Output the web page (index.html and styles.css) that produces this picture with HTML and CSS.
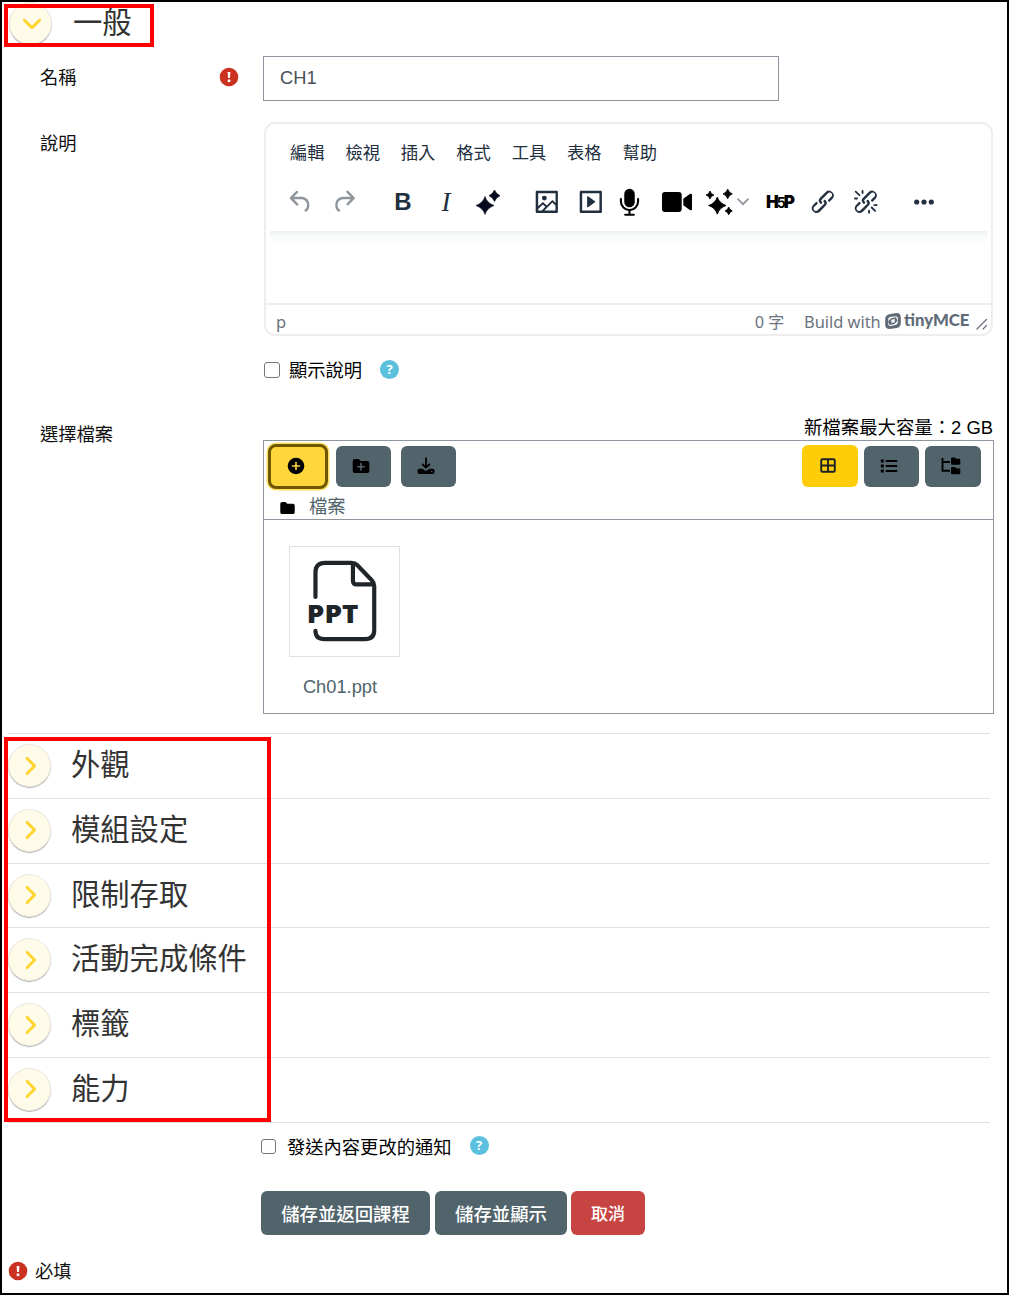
FILE: index.html
```html
<!DOCTYPE html>
<html lang="zh-Hant">
<head>
<meta charset="utf-8">
<title>CH1</title>
<link rel="stylesheet" href="styles.css">
</head>
<body>
<svg class="defs" aria-hidden="true">
  <symbol id="required" viewBox="0 0 20 20"><circle cx="10" cy="10" r="9.3" fill="#ca3120"/><path d="M8.600 5h2.800l-.4 6H9z" fill="#fff"/><circle cx="10" cy="13.800" r="1.500" fill="#fff"/></symbol>
  <symbol id="link" viewBox="0 0 24 24"><path d="M6.2 12.3a1 1 0 0 1 1.4 1.4l-2 2a2 2 0 1 0 2.6 2.8l4.8-4.8a1 1 0 0 0 0-1.4 1 1 0 1 1 1.4-1.3 2.9 2.9 0 0 1 0 4L9.6 20a3.9 3.9 0 0 1-5.5-5.5l2-2Zm11.6-.6a1 1 0 0 1-1.4-1.4l2-2a2 2 0 1 0-2.6-2.8L11 10.3a1 1 0 0 0 0 1.4A1 1 0 1 1 9.6 13a2.9 2.9 0 0 1 0-4L14.4 4a3.9 3.9 0 0 1 5.5 5.5l-2 2Z"/></symbol>
  <symbol id="chevron" viewBox="0 0 20 20"><path d="M6.200 2.400 13.600 10l-7.400 7.600" fill="none" stroke="#ffd42e" stroke-width="2.900" stroke-linecap="round" stroke-linejoin="round"/></symbol>
</svg>
<main class="frame">
  <div class="mark mark-top"></div>
  <div class="mark mark-list"></div>

  <h3 class="section general"><span class="toggle"><svg class="down"><use href="#chevron"/></svg></span>一般</h3>

  <div class="row name-row">
    <label class="label">名稱</label>
    <svg class="req"><use href="#required"/></svg>
    <div class="input">CH1</div>
  </div>

  <div class="row editor-row">
    <label class="label">說明</label>
    <div class="editor">
      <nav class="menu"><span>編輯</span><span>檢視</span><span>插入</span><span>格式</span><span>工具</span><span>表格</span><span>幫助</span></nav>
      <div class="toolbar">
        <span class="w46 dim"><svg class="ic" viewBox="0 0 24 24"><path d="M6.4 8H12c3.7 0 6.2 2 6.8 5.1.6 2.7-.4 5.6-2.3 6.8a1 1 0 0 1-1-1.8c1.1-.6 1.8-2.7 1.4-4.6-.5-2.1-2.1-3.5-4.9-3.5H6.4l3.3 3.3a1 1 0 1 1-1.4 1.4l-5-5a1 1 0 0 1 0-1.4l5-5a1 1 0 0 1 1.4 1.4L6.4 8Z"/></svg></span>
        <span class="w40 dim"><svg class="ic" viewBox="0 0 24 24"><path d="M17.6 10H12c-2.8 0-4.4 1.4-4.9 3.5-.4 2 .3 4 1.4 4.6a1 1 0 1 1-1 1.8c-2-1.2-2.9-4.1-2.3-6.8.6-3 3-5.1 6.8-5.1h5.6l-3.3-3.3a1 1 0 1 1 1.4-1.4l5 5a1 1 0 0 1 0 1.4l-5 5a1 1 0 0 1-1.4-1.4l3.3-3.3Z"/></svg></span>
        <span class="w42 gap18 bold">B</span>
        <span class="w44 italic">I</span>
        <span class="w40"><svg class="sparkle" viewBox="0 0 26 26"><path fill="#050a1c" stroke="#050a1c" stroke-width=".6" d="M10 7.500q2 6.500 9 9-7 2.500-9 9-2-6.500-9-9 7-2.500 9-9ZM19.500 1q1.500 4 5.500 5.700-4 1.700-5.500 5.800-1.500-4.100-5.500-5.800 4-1.700 5.500-5.700Z"/></svg></span>
        <span class="w42 gap18"><svg class="ic" viewBox="0 0 24 24"><path fill-rule="evenodd" d="m5 15.700 3.300-3.200c.3-.3.700-.3 1 0L12 15l4.100-4c.3-.4.800-.4 1 0l2 1.900V5H5v10.700ZM5 18V19h3l2.800-2.900-2-2L5 17.900Zm14-3-2.500-2.400-6.400 6.500H19v-4ZM4 3h16c.6 0 1 .4 1 1v16c0 .6-.4 1-1 1H4a1 1 0 0 1-1-1V4c0-.6.400-1 1-1Zm6 8a2 2 0 1 0 0-4 2 2 0 0 0 0 4Z"/></svg></span>
        <span class="w45"><svg class="ic" viewBox="0 0 24 24"><path fill-rule="evenodd" d="M4 3h16c.6 0 1 .4 1 1v16c0 .6-.4 1-1 1H4a1 1 0 0 1-1-1V4c0-.6.400-1 1-1Zm1 2v14h14V5H5Zm4.800 2.600 5.600 4a.5.5 0 0 1 0 .8l-5.600 4A.5.5 0 0 1 9 16V8a.5.5 0 0 1 .8-.4Z"/></svg></span>
        <span class="w33"><svg class="mic" viewBox="0 0 22 30"><rect x="5.500" y="1" width="11" height="19.500" rx="5.500" fill="#000"/><path d="M2 12v2.500a9 9 0 0 0 18 0V12M11 23.500v4.500M6.500 28.300h9" fill="none" stroke="#000" stroke-width="2.200" stroke-linecap="round"/></svg></span>
        <span class="w45 gap8"><svg class="video" viewBox="0 0 30 20"><rect width="19.700" height="20" rx="3" fill="#000"/><path fill="#000" d="M21.300 6.800 27.800 2q2.200-1 2.200 1v14q0 2-2.200 1l-6.500-4.800z"/></svg></span>
        <span class="w35 gap3"><svg class="stars" viewBox="0 0 28 28"><path fill="#000" stroke="#000" stroke-width=".8" stroke-linejoin="round" d="M12.300 9q2 6.200 8.700 8.500-6.700 2.300-8.700 8.700-2-6.400-8.700-8.700Q10.300 15.200 12.300 9ZM22.700 1q1 3.700 4.700 4.900-3.700 1.200-4.700 4.900-1-3.700-4.700-4.900 3.700-1.200 4.700-4.900ZM5 3q.8 3.100 4 4-3.200.9-4 4-.8-3.100-4-4 3.200-.9 4-4ZM23.700 19q.8 3 3.600 3.900-2.800.9-3.600 3.900-.8-3-3.600-3.900 2.800-.9 3.600-3.900Z"/></svg></span>
        <span class="w12"><svg class="caret" viewBox="0 0 12 8"><path d="m1 1.200 5 5 5-5" fill="none" stroke="#8e959d" stroke-width="1.700" stroke-linecap="round"/></svg></span>
        <span class="w36 gap13 h5p">H<small>5</small>P</span>
        <span class="w38 gap6"><svg class="ic"><use href="#link"/></svg></span>
        <span class="w38 gap5"><svg class="ic" viewBox="0 0 24 24"><use href="#link" width="24" height="24"/><path d="M7.600 6.300a.8.8 0 0 1-1 1.100L3.300 4.200a.7.7 0 1 1 1-1l3.200 3.100ZM5.100 8.600a.8.8 0 0 1 0 1.500H3a.8.8 0 0 1 0-1.500h2Zm5-3.500a.8.8 0 0 1-1.500 0V3a.8.8 0 0 1 1.500 0v2Zm6 11.800a.8.8 0 0 1 1-1l3.200 3.200a.8.8 0 0 1-1 1L16 17Zm-2.200 2a.8.8 0 0 1 1.500 0V21a.8.8 0 0 1-1.500 0V19Zm5-3.500a.7.7 0 1 1 0-1.500H21a.8.8 0 0 1 0 1.500h-2Z"/></svg></span>
        <span class="w40 gap19"><svg class="dots" viewBox="0 0 20 6"><circle cx="2.700" cy="3" r="2.600"/><circle cx="10" cy="3" r="2.600"/><circle cx="17.300" cy="3" r="2.600"/></svg></span>
      </div>
      <div class="canvas"></div>
      <div class="status">
        <span class="path">p</span>
        <span class="count">0 字</span>
        <span class="build">Build with</span>
        <svg class="tlogo" viewBox="0 0 16 16"><path fill="#606b78" fill-rule="evenodd" d="M5.500 1 11 .1Q15.500-.3 15.800 4v6.500q-.3 3.800-4 4.500L5 15.900Q.3 16 .2 12V5.500Q.6 1.800 5.500 1ZM6 3.700Q3.200 4.300 3.200 7v4.200q.2 2 2.600 1.700l4.400-.8q2.500-.6 2.600-2.900V5.100q-.2-2-2.600-1.700Z"/><path fill="#606b78" fill-rule="evenodd" d="m3 8.500 3-3.300 5-.9 1.500 3.400-3 3.300-5 .9ZM6.400 6.700v3.200l3.300-.6V6.100Z"/></svg>
        <span class="tiny">tinyMCE</span>
        <svg class="resize" viewBox="0 0 12 12"><path d="M1 11 10.500 1.500M7 11l3.500-3.500" stroke="#69727e" stroke-width="1.300" stroke-linecap="round"/></svg>
      </div>
    </div>
  </div>

  <div class="check show-desc"><span class="box"></span><span class="text">顯示說明</span><span class="help">?</span></div>

  <div class="maxsize">新檔案最大容量：2 GB</div>
  <div class="row files-row">
    <label class="label">選擇檔案</label>
    <div class="files">
      <div class="files-head">
        <div class="buttons">
          <button class="btn add"><svg viewBox="0 0 18 18"><circle cx="9" cy="9" r="8.300"/><path d="M9 5.500v7M5.500 9h7" stroke="#ffd73a" stroke-width="1.600" stroke-linecap="round"/></svg></button>
          <button class="btn"><svg viewBox="0 0 18 18"><path d="M.7 4q0-2 2-2h4l2 2h6.600q2 0 2 2v8q0 2-2 2H2.700q-2 0-2-2Z"/><path d="M9 6.500v6.400M5.800 9.700h6.400" stroke="#51646b" stroke-width="1.600" stroke-linecap="round"/></svg></button>
          <button class="btn dl"><svg viewBox="0 0 18 18"><path d="M9 1.200v9M5.700 7.500 9 10.700l3.300-3.200" fill="none" stroke="#000" stroke-width="1.800" stroke-linecap="round" stroke-linejoin="round"/><path d="M2.300 11.800h3L9 14l3.700-2.200h3q1.800 0 1.800 1.700v1.700q0 1.800-1.800 1.800H2.300Q.5 17 .5 15.200v-1.700q0-1.700 1.800-1.700Z"/><circle cx="14.700" cy="14.500" r=".8" fill="#51646b"/></svg></button>
          <button class="btn view on"><svg viewBox="0 0 18 18"><path d="M3.500 2.200h11q1.300 0 1.300 1.300v10q0 1.300-1.300 1.300h-11q-1.300 0-1.300-1.300v-10q0-1.300 1.300-1.300ZM9 2.200v12.600M2.200 8.500h13.600" fill="none" stroke="#1d2125" stroke-width="1.900"/></svg></button>
          <button class="btn view"><svg viewBox="0 0 18 18"><path d="M6.500 4h10M6.500 9h10M6.500 14h10" stroke="#000" stroke-width="1.800" stroke-linecap="round"/><path d="M.8 2.500h3v3h-3zM.8 7.500h3v3h-3zM.8 12.500h3v3h-3z"/></svg></button>
          <button class="btn view tree"><svg viewBox="0 0 20 18"><path d="M1.500 1v12.700H9M1.500 5H9" fill="none" stroke="#000" stroke-width="1.900"/><path d="M10 1.500q0-1 1-1h3l1.200 1.200H18q1.300 0 1.300 1.300v3.500q0 1.300-1.300 1.300h-6.800Q10 7.800 10 6.500ZM10 11q0-1 1-1h3l1.200 1.200H18q1.300 0 1.300 1.300V16q0 1.300-1.300 1.300h-6.800Q10 17.300 10 16Z"/></svg></button>
        </div>
        <div class="crumb"><svg viewBox="0 0 16 14"><path d="M.3 2.500q0-2 2-2h3.500l2 1.900h5.900q2 0 2 2v7.100q0 2-2 2H2.300q-2 0-2-2Z"/></svg><span>檔案</span></div>
      </div>
      <div class="file">
        <div class="thumb"><svg viewBox="0 0 110 110"><g fill="none" stroke="#20252a" stroke-width="4.200" stroke-linecap="round" stroke-linejoin="round"><path d="M25.700 50.500V25.500q0-9.500 9.500-9.500H62q3.500 0 6 2.500l14.500 15q2.500 2.500 2.500 6v44.500q0 9-9.500 9H35q-9.300 0-9.300-8.500"/><path d="M63.500 18v16q0 3.700 3.700 3.700H83"/></g><text x="17" y="77" textLength="52" lengthAdjust="spacingAndGlyphs">PPT</text></svg></div>
        <div class="filename">Ch01.ppt</div>
      </div>
    </div>
  </div>

  <div class="sections">
    <h3 class="section"><span class="toggle"><svg><use href="#chevron"/></svg></span>外觀</h3>
    <h3 class="section"><span class="toggle"><svg><use href="#chevron"/></svg></span>模組設定</h3>
    <h3 class="section"><span class="toggle"><svg><use href="#chevron"/></svg></span>限制存取</h3>
    <h3 class="section"><span class="toggle"><svg><use href="#chevron"/></svg></span>活動完成條件</h3>
    <h3 class="section"><span class="toggle"><svg><use href="#chevron"/></svg></span>標籤</h3>
    <h3 class="section"><span class="toggle"><svg><use href="#chevron"/></svg></span>能力</h3>
  </div>

  <div class="check notify"><span class="box"></span><span class="text">發送內容更改的通知</span><span class="help">?</span></div>
  <div class="actions"><button class="action save-back">儲存並返回課程</button><button class="action save-show">儲存並顯示</button><button class="action cancel">取消</button></div>
  <div class="footer"><svg class="req"><use href="#required"/></svg>必填</div>
</main>
</body>
</html>
```
FILE: styles.css
```css
* { box-sizing: border-box; }
body { margin: 0; background: #fff; color: #1d2125; font-family: "Liberation Sans", "Noto Sans CJK TC", sans-serif; font-size: 18.3px; }
button { font: inherit; padding: 0; border: 0; }
svg { display: block; flex: none; }
.defs { position: absolute; width: 0; height: 0; }
.frame { position: relative; width: 1009px; height: 1295px; border: 2px solid #000; overflow: hidden; }

/* highlight rectangles laid over the form */
.mark { position: absolute; z-index: 2; border: 4px solid #f00; }
.mark-top { left: 2px; top: 2px; width: 150px; height: 43px; }
.mark-list { left: 2px; top: 735px; width: 267px; height: 385px; }

.section { display: flex; align-items: flex-start; gap: 20px; margin: 0; padding-left: 1px; font-size: 29.3px; font-weight: 400; color: #333; }
.toggle { display: flex; align-items: center; justify-content: center; width: 43px; height: 43px; border-radius: 50%; background: #fffbe9; border: 1px solid #ebe7e0; box-shadow: 0 1px 1px -0.3px rgba(0,0,0,.4); }
.toggle svg { width: 20px; height: 20px; margin-left: 3px; }
.toggle svg.down { transform: rotate(90deg); margin: 0 0 0 2px; }
.general { height: 44px; padding-left: 7px; line-height: 42px; gap: 21px; }

.row { display: flex; align-items: flex-start; }
.label { padding-left: 38px; line-height: 26px; color: #111; flex: none; }
.name-row { margin-top: 10px; height: 66px; }
.name-row .label { width: 217px; padding-top: 9px; }
.req { width: 20px; height: 20px; }
.name-row .req { margin-top: 11px; }
.input { width: 516px; height: 45px; margin-left: 24px; border: 1px solid #8f959e; line-height: 42px; padding-left: 16px; color: #495057; }
.editor-row .label { width: 262px; padding-top: 9px; }

.editor { width: 729px; height: 214px; border: 2px solid #eee; border-radius: 11px; overflow: hidden; display: flex; flex-direction: column; }
.menu { height: 57px; padding: 0 24px; display: flex; gap: 20.900px; line-height: 58px; font-size: 17.250px; color: #222f3e; }
.toolbar { height: 50px; padding: 0 0 8px 12px; display: flex; align-items: center; }
.toolbar > span { display: flex; align-items: center; justify-content: center; flex: none; height: 42px; }
.ic { width: 29.600px; height: 29.600px; fill: #222f3e; }
.dim .ic { fill: #8e959d; }
.sparkle { width: 26px; height: 26px; }
.mic { width: 21px; height: 30px; }
.video { width: 30px; height: 20px; }
.stars { width: 28px; height: 28px; margin-right: 2px; }
.caret { width: 12px; height: 8px; }
.dots { width: 20px; height: 6px; fill: #222f3e; }
.bold { font: bold 24px "Liberation Sans", sans-serif; color: #222f3e; }
.italic { font: italic 27px "Liberation Serif", serif; color: #222f3e; }
.h5p { font: 900 17px Inter, sans-serif; letter-spacing: -1px; color: #000; }
.h5p small { font-size: 14px; margin: 1px -1px 0; font-weight: 700; }
.w12 { width: 12px; } .w33 { width: 33px; } .w35 { width: 35px; } .w36 { width: 36px; } .w38 { width: 38px; }
.w40 { width: 40px; } .w42 { width: 42px; } .w44 { width: 44px; } .w45 { width: 45px; } .w46 { width: 46px; }
.gap3 { margin-left: 3px; } .gap5 { margin-left: 5px; } .gap6 { margin-left: 6px; } .gap8 { margin-left: 8px; }
.gap13 { margin-left: 13px; } .gap18 { margin-left: 18px; } .gap19 { margin-left: 19px; }
.canvas { flex: 1; margin: 0 4px; background: linear-gradient(#eeefef, #fafbfb 6px, #fff 16px); }
.status { height: 31px; border-top: 2px solid #eee; display: flex; line-height: 35px; color: #69727e; font-size: 16.500px; overflow: hidden; padding-left: 10px; }
.status .path { width: 479px; font: 16.500px/34px "Noto Sans", sans-serif; }
.count { width: 49px; font-size: 16px; }
.build { width: 81px; font: 16.400px/34px "Noto Sans", sans-serif; white-space: nowrap; }
.tlogo { width: 16px; height: 16px; margin-top: 8px; }
.tiny { margin-left: 3px; width: 72px; font: 900 16.700px/31px Lato, sans-serif; color: #606b78; white-space: nowrap; }
.resize { width: 12px; height: 12px; margin-top: 13px; }

.check { display: flex; align-items: center; height: 26px; line-height: 26px; color: #000; }
.box { width: 16px; height: 16px; border: 1.500px solid #767676; border-radius: 3px; }
.text { margin-left: 9px; }
.help { width: 19px; height: 19px; margin: -3px 0 0 18px; border-radius: 50%; background: #5bc0de; color: #fff; font: bold 13px/19px "Open Sans", sans-serif; text-align: center; }
.show-desc { margin: 22px 0 0 262px; }
.show-desc .box { margin-top: -3px; }

.maxsize { height: 26px; margin-top: 30px; padding-right: 14px; text-align: right; line-height: 28px; font-size: 18.400px; color: #000; }
.files-row .label { width: 261px; margin-top: -18px; }
.files { width: 731px; height: 274px; border: 1px solid #8f959e; }
.files-head { height: 79px; border-bottom: 1px solid #8f959e; }
.buttons { display: flex; height: 52px; padding: 3px 12px 0 4px; }
.btn { width: 55px; height: 41px; margin: 2px 0 0 10px; border-radius: 6px; background: #51646b; display: flex; align-items: center; justify-content: center; }
.btn svg { width: 18px; height: 18px; margin: 0 5px 2px 0; }
.btn.add { width: 60px; height: 45px; margin: 0; background: #ffd73a; border: 3px solid #6f5700; box-shadow: 0 0 0 1.500px #ffdf63; border-radius: 8px; }
.btn.add + .btn { margin-left: 8px; }
.btn.view { margin-left: 6px; }
.btn.view.on { width: 56px; height: 42px; margin: 1px 0 0 auto; background: #ffcc0a; }
.btn.on svg { margin-bottom: 0; }
.btn.tree { width: 56px; }
.btn.tree svg { width: 20px; }
.crumb { display: flex; padding-left: 16px; line-height: 26px; color: #51646b; height: 26px; margin-top: 1px; }
.crumb svg { width: 15px; height: 14px; margin: 7px 14px 0 0; }
.file { width: 111px; margin: 26px 0 0 25px; }
.thumb { width: 111px; height: 111px; border: 1px solid #dee2e6; }
.thumb svg { width: 109px; height: 109px; }
.thumb text { font: 800 25.500px "Open Sans", sans-serif; fill: #20252a; }
.filename { margin-top: 17px; padding-right: 9px; line-height: 26px; text-align: center; color: #51646b; }

.sections { margin: 19px 17px 0 5px; border-top: 1px solid #dee2e6; }
.sections .section { height: 64.750px; border-bottom: 1px solid #dee2e6; line-height: 62px; }
.sections .toggle { margin-top: 10px; }

.notify { margin: 12px 0 0 259px; }
.notify .box { width: 15px; height: 15px; margin-top: -3px; }
.notify .text { margin-left: 11px; }
.notify .help { margin-top: -4px; }
.actions { display: flex; margin: 30px 0 0 259px; }
.action { height: 44px; background: #51646b; color: #fff; border-radius: 6px; font-weight: 500; font-size: 18.400px; }
.save-back { width: 169px; }
.save-show { width: 132px; margin: 0 4px 0 5px; }
.cancel { width: 74px; background: #c64442; font-size: 17px; }
.footer { display: flex; align-items: center; gap: 7px; height: 26px; line-height: 26px; margin: 24px 0 0 6px; color: #111; }
.footer .req { margin-top: -1px; }
```
